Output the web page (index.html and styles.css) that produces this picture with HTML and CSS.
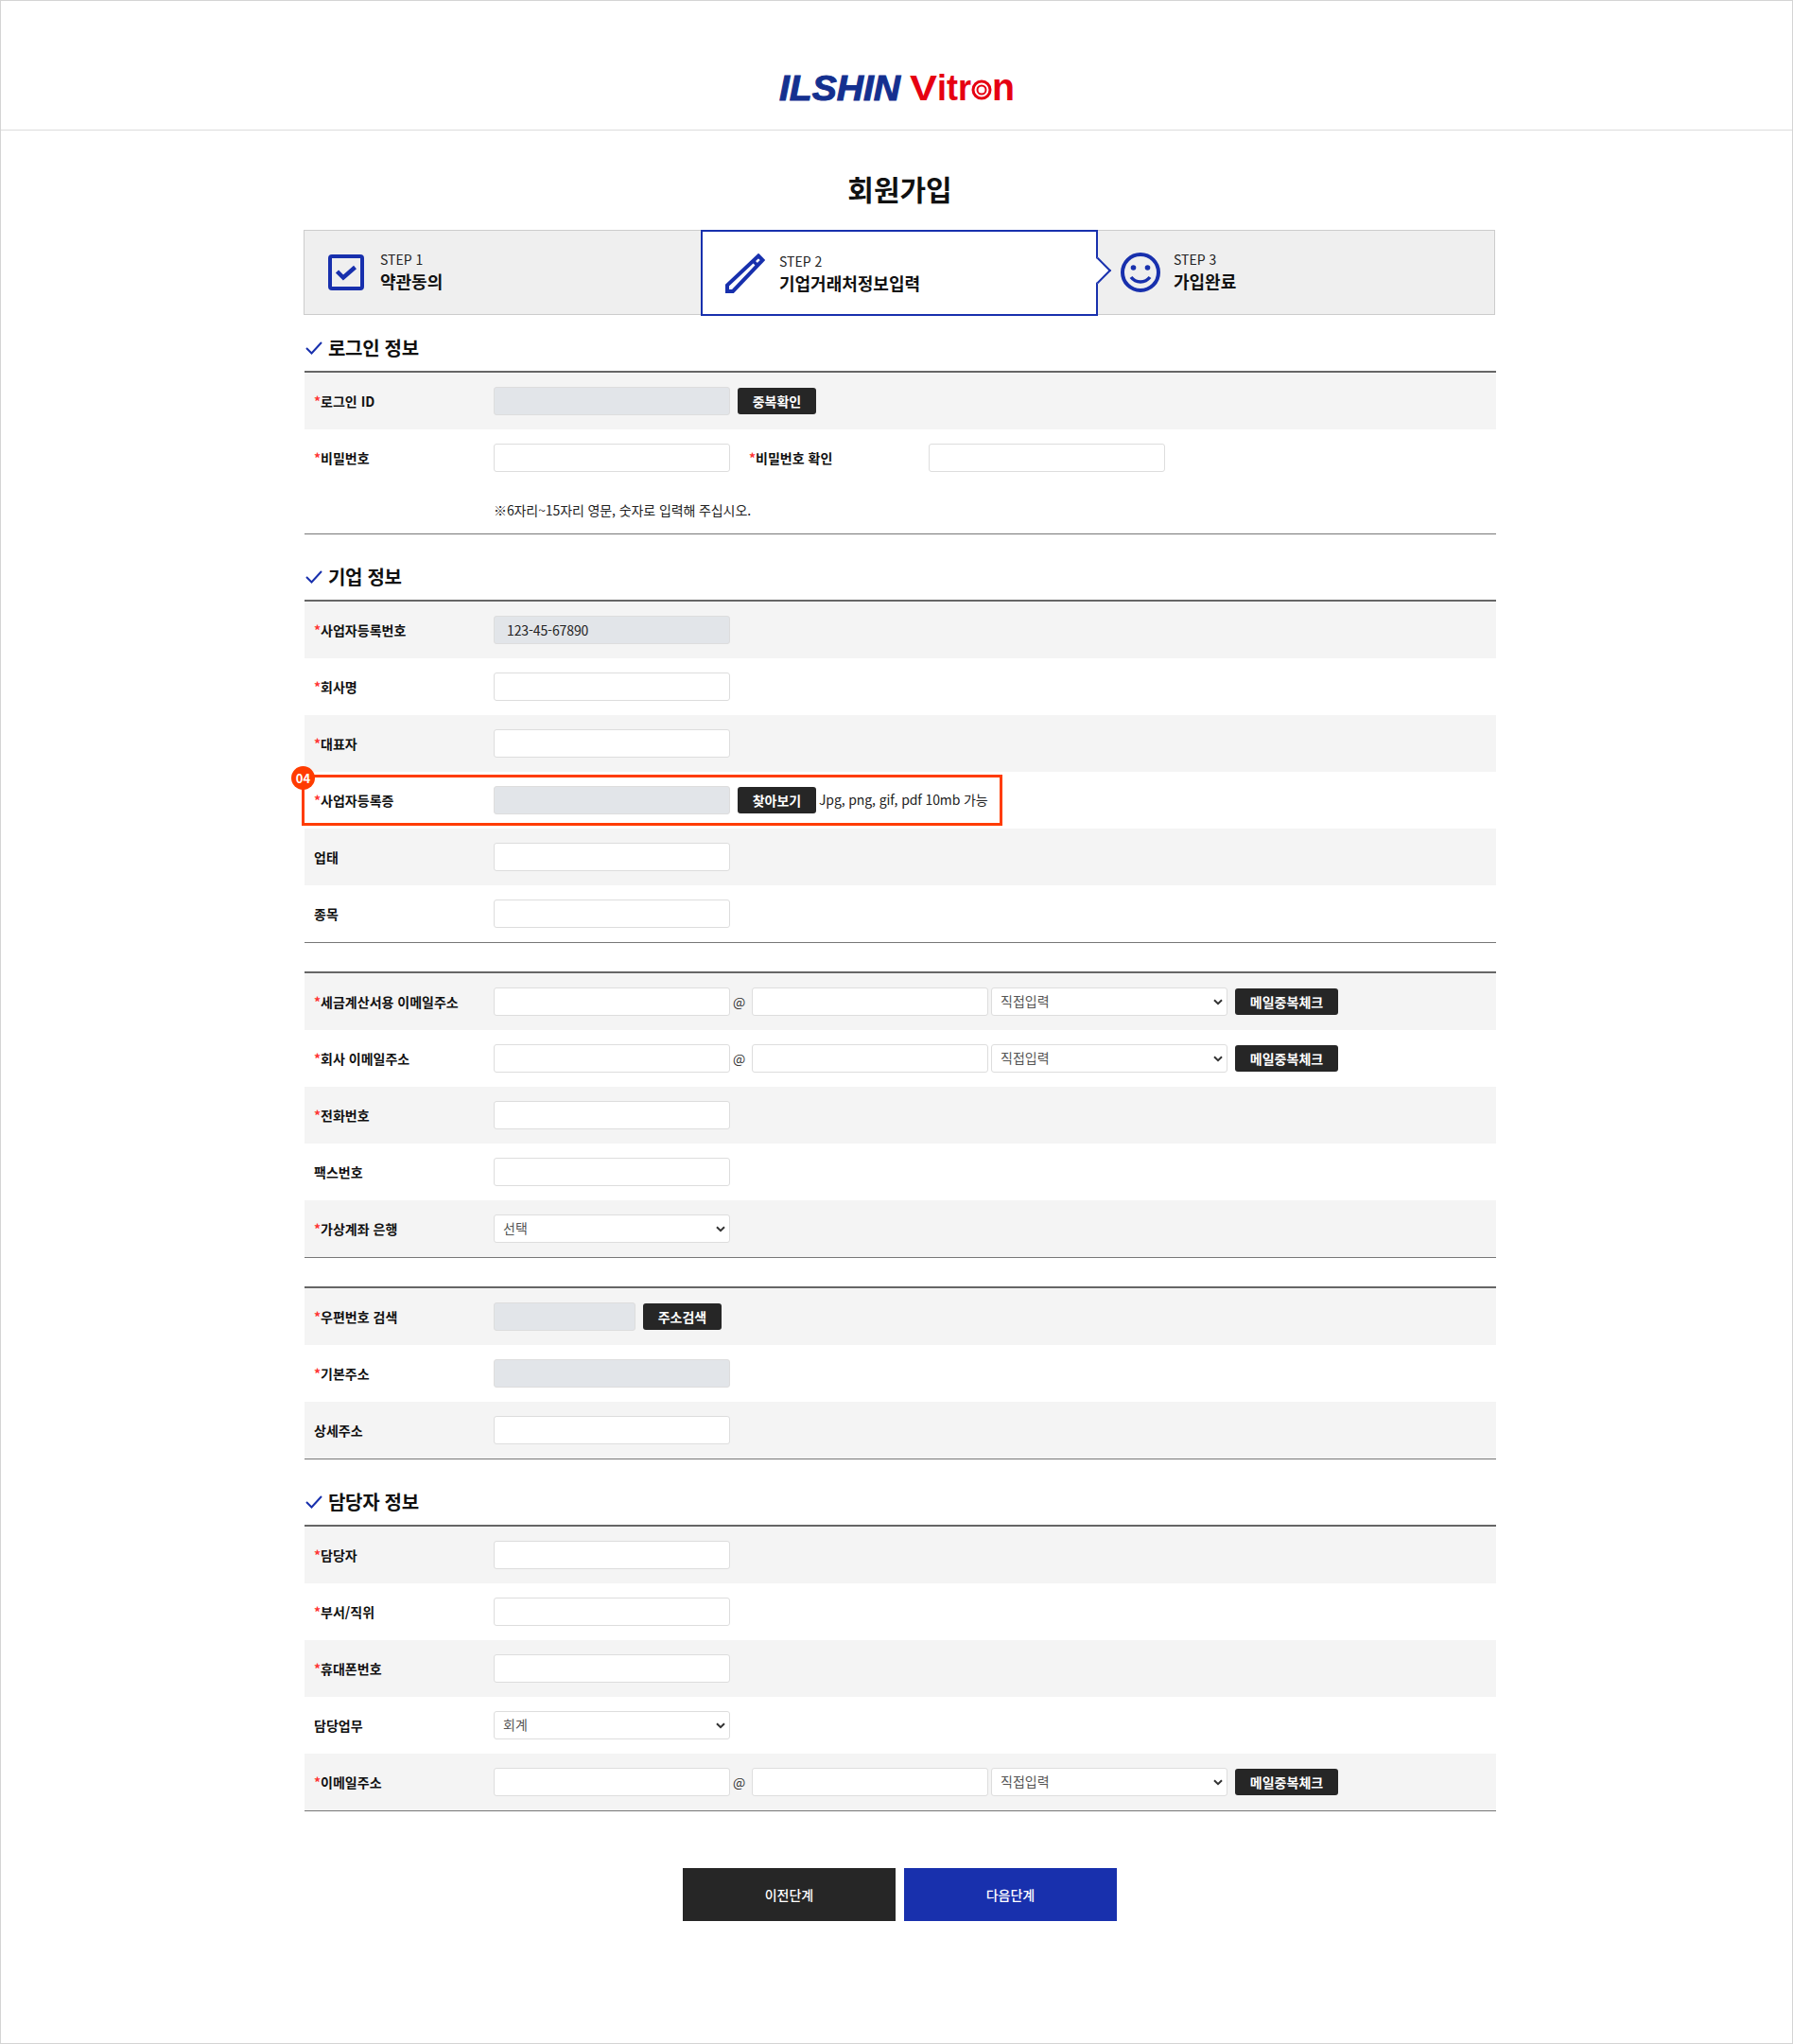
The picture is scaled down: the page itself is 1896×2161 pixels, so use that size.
FILE: index.html
```html
<!DOCTYPE html>
<html lang="ko">
<head>
<meta charset="UTF-8">
<meta name="viewport" content="width=device-width, initial-scale=1.0">
<title>회원가입</title>
<link rel="stylesheet" href="styles.css">
</head>
<body>
<div class="page">

<header class="header">
    <svg class="logo" width="256" height="50" viewBox="0 0 256 50">
        <text class="logo-blue" x="4" y="40" textLength="128" lengthAdjust="spacingAndGlyphs">ILSHIN</text>
        <text class="logo-red" x="142" y="40" textLength="29" lengthAdjust="spacingAndGlyphs">V</text>
        <text class="logo-red logo-low" x="171" y="40" textLength="36" lengthAdjust="spacingAndGlyphs">itr</text>
        <circle class="logo-ring" cx="218" cy="29" r="9"></circle>
        <circle class="logo-ring-in" cx="218" cy="29" r="4.5"></circle>
        <text class="logo-red logo-n" x="229" y="40" textLength="24" lengthAdjust="spacingAndGlyphs">n</text>
    </svg>
</header>

<div class="wrap">
    <h1 class="title">회원가입</h1>

    <div class="steps">
        <div class="step step-first">
            <svg class="step-icon" width="38" height="38" viewBox="0 0 38 38">
                <rect x="2" y="2" width="34" height="34" rx="2" fill="none" stroke="#1830ad" stroke-width="4"></rect>
                <path d="M9.5 18l6.500 6.500L28.500 13.500" fill="none" stroke="#1830ad" stroke-width="4.500"></path>
            </svg>
            <div class="step-text">
                <div class="step-no">STEP 1</div>
                <div class="step-name">약관동의</div>
            </div>
        </div>
        <div class="step step-on">
            <svg class="step-icon" width="42" height="42" viewBox="0 0 42 42">
                <path d="M35 2.500L39.500 7 8 40H2V33.500Z" fill="none" stroke="#1830ad" stroke-width="4"></path>
                <path d="M29 7.500l5.500 5.500" fill="none" stroke="#1830ad" stroke-width="3.500"></path>
            </svg>
            <div>
                <div class="step-no">STEP 2</div>
                <div class="step-name">기업거래처정보입력</div>
            </div>
            <span class="step-arrow"></span>
        </div>
        <div class="step step-last">
            <svg class="step-icon" width="42" height="42" viewBox="0 0 42 42">
                <circle cx="21" cy="21" r="19" fill="none" stroke="#1830ad" stroke-width="4"></circle>
                <circle cx="13.500" cy="16" r="2.800" fill="#1830ad"></circle>
                <circle cx="28.500" cy="16" r="2.800" fill="#1830ad"></circle>
                <path d="M11 26c5 6.500 15 6.500 20 0" fill="none" stroke="#1830ad" stroke-width="3.500"></path>
            </svg>
            <div class="step-text">
                <div class="step-no">STEP 3</div>
                <div class="step-name">가입완료</div>
            </div>
        </div>
    </div>

    <h2 class="sec-title sec-first">
        <svg width="18" height="14" viewBox="0 0 18 14"><path d="M1 7l5.500 5.500L17 1" fill="none" stroke="#1830ad" stroke-width="2"></path></svg>
        로그인 정보
    </h2>
    <div class="form-box">
        <div class="form-row">
            <label class="lbl"><em>*</em>로그인 ID</label>
            <input class="inp" type="text" readonly>
            <button class="btn-sm" type="button">중복확인</button>
        </div>
        <div class="form-row">
            <label class="lbl"><em>*</em>비밀번호</label>
            <input class="inp" type="password">
            <label class="lbl lbl-side"><em>*</em>비밀번호 확인</label>
            <input class="inp" type="password">
        </div>
        <div class="note-row">※6자리~15자리 영문, 숫자로 입력해 주십시오.</div>
    </div>

    <h2 class="sec-title">
        <svg width="18" height="14" viewBox="0 0 18 14"><path d="M1 7l5.500 5.500L17 1" fill="none" stroke="#1830ad" stroke-width="2"></path></svg>
        기업 정보
    </h2>
    <div class="form-box">
        <div class="form-row">
            <label class="lbl"><em>*</em>사업자등록번호</label>
            <input class="inp" type="text" value="123-45-67890" readonly>
        </div>
        <div class="form-row">
            <label class="lbl"><em>*</em>회사명</label>
            <input class="inp" type="text">
        </div>
        <div class="form-row">
            <label class="lbl"><em>*</em>대표자</label>
            <input class="inp" type="text">
        </div>
        <div class="form-row">
            <label class="lbl"><em>*</em>사업자등록증</label>
            <input class="inp" type="text" readonly>
            <button class="btn-sm" type="button">찾아보기</button>
            <span class="hint">Jpg, png, gif, pdf 10mb 가능</span>
            <span class="callout"><span class="badge">04</span></span>
        </div>
        <div class="form-row">
            <label class="lbl">업태</label>
            <input class="inp" type="text">
        </div>
        <div class="form-row">
            <label class="lbl">종목</label>
            <input class="inp" type="text">
        </div>
    </div>

    <div class="form-box box-next">
        <div class="form-row">
            <label class="lbl"><em>*</em>세금계산서용 이메일주소</label>
            <input class="inp" type="text">
            <span class="at">@</span>
            <input class="inp" type="text">
            <select class="sel sel-mail"><option>직접입력</option></select>
            <button class="btn-sm btn-mail" type="button">메일중복체크</button>
        </div>
        <div class="form-row">
            <label class="lbl"><em>*</em>회사 이메일주소</label>
            <input class="inp" type="text">
            <span class="at">@</span>
            <input class="inp" type="text">
            <select class="sel sel-mail"><option>직접입력</option></select>
            <button class="btn-sm btn-mail" type="button">메일중복체크</button>
        </div>
        <div class="form-row">
            <label class="lbl"><em>*</em>전화번호</label>
            <input class="inp" type="text">
        </div>
        <div class="form-row">
            <label class="lbl">팩스번호</label>
            <input class="inp" type="text">
        </div>
        <div class="form-row">
            <label class="lbl"><em>*</em>가상계좌 은행</label>
            <select class="sel"><option>선택</option></select>
        </div>
    </div>

    <div class="form-box box-next">
        <div class="form-row">
            <label class="lbl"><em>*</em>우편번호 검색</label>
            <input class="inp inp-zip" type="text" readonly>
            <button class="btn-sm" type="button">주소검색</button>
        </div>
        <div class="form-row">
            <label class="lbl"><em>*</em>기본주소</label>
            <input class="inp" type="text" readonly>
        </div>
        <div class="form-row">
            <label class="lbl">상세주소</label>
            <input class="inp" type="text">
        </div>
    </div>

    <h2 class="sec-title">
        <svg width="18" height="14" viewBox="0 0 18 14"><path d="M1 7l5.500 5.500L17 1" fill="none" stroke="#1830ad" stroke-width="2"></path></svg>
        담당자 정보
    </h2>
    <div class="form-box">
        <div class="form-row">
            <label class="lbl"><em>*</em>담당자</label>
            <input class="inp" type="text">
        </div>
        <div class="form-row">
            <label class="lbl"><em>*</em>부서/직위</label>
            <input class="inp" type="text">
        </div>
        <div class="form-row">
            <label class="lbl"><em>*</em>휴대폰번호</label>
            <input class="inp" type="text">
        </div>
        <div class="form-row">
            <label class="lbl">담당업무</label>
            <select class="sel"><option>회계</option></select>
        </div>
        <div class="form-row">
            <label class="lbl"><em>*</em>이메일주소</label>
            <input class="inp" type="text">
            <span class="at">@</span>
            <input class="inp" type="text">
            <select class="sel sel-mail"><option>직접입력</option></select>
            <button class="btn-sm btn-mail" type="button">메일중복체크</button>
        </div>
    </div>

    <div class="btn-area">
        <button class="btn-big" type="button">이전단계</button>
        <button class="btn-big btn-blue" type="button">다음단계</button>
    </div>
</div>

</div>
</body>
</html>
```

FILE: styles.css
```css
* {
    box-sizing: border-box;
}
body {
    margin: 0;
    font-family: "Noto Sans CJK KR", "Noto Sans", sans-serif;
    font-size: 14px;
    color: #111;
}
.page {
    height: 2161px;
    border: 1px solid #d4d4d4;
    background-color: #fff;
}

/* header */
.header {
    height: 137px;
    padding-top: 65px;
    border-bottom: 1px solid #ddd;
    text-align: center;
}
.logo {
    display: inline-block;
}
.logo-blue {
    font-family: "Liberation Sans", sans-serif;
    font-size: 37px;
    font-weight: bold;
    font-style: italic;
    fill: #14308f;
    stroke: #14308f;
    stroke-width: 1;
}
.logo-red {
    font-family: "Liberation Sans", sans-serif;
    font-size: 37px;
    font-weight: bold;
    fill: #e60012;
}
.logo-low {
    font-size: 39px;
}
.logo-n {
    font-size: 41px;
}
.logo-ring {
    fill: none;
    stroke: #e60012;
    stroke-width: 3;
}
.logo-ring-in {
    fill: none;
    stroke: #e60012;
    stroke-width: 2;
}

.wrap {
    width: 1261px;
    margin-left: 320px;
}
.title {
    margin: 0;
    padding: 41px 0 24px;
    font-size: 30px;
    line-height: 40px;
    font-weight: 700;
    text-align: center;
}

/* steps */
.steps {
    display: flex;
    width: 1260px;
    height: 90px;
    border: 1px solid #ccc;
    background-color: #efefef;
}
.step {
    display: flex;
    align-items: center;
    padding-left: 25px;
}
.step-text {
    margin-top: -2px;
}
.step-first {
    width: 419px;
}
.step-first .step-icon {
    margin-right: 17px;
}
.step-on {
    position: relative;
    width: 420px;
    height: 91px;
    margin-top: -1px;
    padding-left: 24px;
    border: 2px solid #1830ad;
    background-color: #fff;
}
.step-on .step-icon {
    margin-right: 15px;
}
.step-last {
    padding-left: 24px;
}
.step-last .step-icon {
    margin-right: 14px;
}
.step-no {
    font-size: 14px;
    line-height: 20px;
    color: #222;
}
.step-name {
    font-size: 18px;
    line-height: 26px;
    font-weight: 700;
}
.step-arrow {
    position: absolute;
    top: 31px;
    right: -12px;
    width: 20px;
    height: 20px;
    border-top: 2px solid #1830ad;
    border-right: 2px solid #1830ad;
    background-color: #fff;
    transform: rotate(45deg);
}

/* sections */
.sec-title {
    display: flex;
    align-items: center;
    gap: 6px;
    margin: 0;
    padding: 30px 0 9px 2px;
    font-size: 20px;
    line-height: 30px;
    font-weight: 700;
    letter-spacing: -0.3px;
}
.sec-first {
    padding-top: 20px;
}
.form-box {
    margin-left: 1px;
    border-top: 2px solid #666;
    border-bottom: 1px solid #777;
}
.box-next {
    margin-top: 30px;
}
.form-row {
    position: relative;
    display: flex;
    align-items: center;
    height: 60px;
}
.form-row:nth-child(odd) {
    background-color: #f4f4f4;
}
.note-row {
    height: 50px;
    padding: 14px 0 0 200px;
    line-height: 22px;
    color: #222;
    letter-spacing: -0.1px;
}
.lbl {
    flex: none;
    width: 200px;
    padding-left: 10px;
    font-weight: 700;
}
.lbl em {
    font-style: normal;
    color: #f33;
}
.lbl-side {
    width: 190px;
    margin-left: 20px;
    padding-left: 0;
}
.inp, .sel {
    flex: none;
    width: 250px;
    height: 30px;
    border: 1px solid #ddd;
    border-radius: 3px;
    background-color: #fff;
    font-family: inherit;
    font-size: 14px;
}
.inp {
    padding: 0 13px;
    color: #222;
    letter-spacing: -0.1px;
}
.inp[readonly] {
    background-color: #e2e5e9;
}
.inp-zip {
    width: 150px;
}
.sel {
    padding: 0 24px 2px 9px;
    color: #555;
    appearance: none;
    background-image: url("data:image/svg+xml,%3Csvg xmlns='http://www.w3.org/2000/svg' width='10' height='7' viewBox='0 0 10 7'%3E%3Cpath d='M1 1.200l4 4 4-4' fill='none' stroke='%23333' stroke-width='2'/%3E%3C/svg%3E");
    background-repeat: no-repeat;
    background-position: right 4px center;
}
.sel-mail {
    margin-left: 3px;
}
.at {
    flex: none;
    width: 23px;
    padding-left: 3px;
    color: #333;
}
.btn-sm {
    flex: none;
    width: 83px;
    height: 28px;
    margin-left: 8px;
    padding: 0;
    border: none;
    border-radius: 3px;
    background-color: #262626;
    color: #fff;
    font-family: inherit;
    font-size: 14px;
    font-weight: 700;
}
.btn-mail {
    width: 109px;
}
.hint {
    margin: -2px 0 0 3px;
    color: #222;
    letter-spacing: -0.12px;
}

/* red box laid over the row */
.callout {
    position: absolute;
    top: 3px;
    left: -3px;
    width: 741px;
    height: 54px;
    border: 3px solid #ff3c00;
}
.badge {
    position: absolute;
    top: -12px;
    left: -14px;
    width: 25px;
    height: 25px;
    border-radius: 50%;
    background-color: #ff3c00;
    color: #fff;
    font-size: 13px;
    font-weight: 700;
    line-height: 25px;
    text-align: center;
}

.btn-area {
    display: flex;
    justify-content: center;
    gap: 9px;
    margin-top: 60px;
}
.btn-big {
    width: 225px;
    height: 56px;
    padding: 0;
    border: none;
    background-color: #262626;
    color: #fff;
    font-family: inherit;
    font-size: 14px;
    font-weight: 500;
}
.btn-blue {
    background-color: #1830ad;
}
```
